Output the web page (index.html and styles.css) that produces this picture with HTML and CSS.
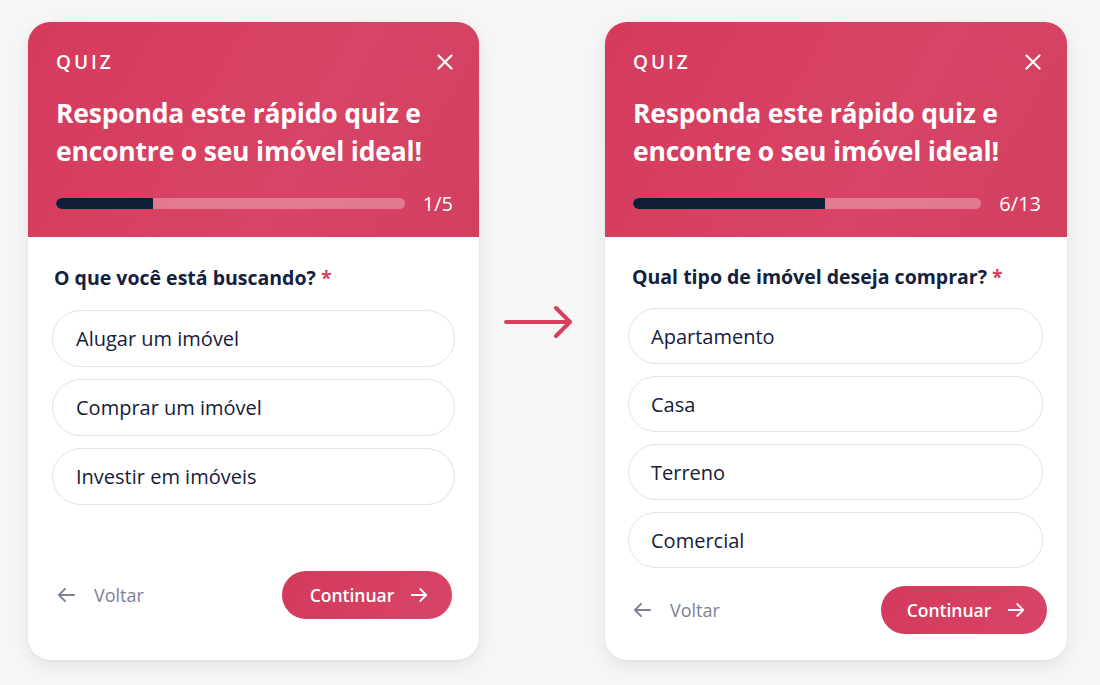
FILE: index.html
```html
<!DOCTYPE html>
<html lang="pt-BR">
<head>
<meta charset="utf-8">
<title>Quiz</title>
<link rel="stylesheet" href="styles.css">
</head>
<body>
<main class="stage">
  <section class="card card--left">
    <header class="card-head">
      <div class="head-top">
        <span class="eyebrow">QUIZ</span>
        <svg class="close" viewBox="0 0 16 16" width="16" height="16"><path d="M1.5 1.5L14.5 14.5M14.5 1.5L1.5 14.5" stroke="#fff" stroke-width="2.2" stroke-linecap="round"/></svg>
      </div>
      <h1 class="title">Responda este rápido quiz e encontre o seu imóvel ideal!</h1>
      <div class="progress">
        <div class="track"><div class="fill" style="width:27.8%"></div></div>
        <span class="count">1/5</span>
      </div>
    </header>
    <div class="card-body">
      <p class="question">O que você está buscando? <span class="req">*</span></p>
      <ul class="options">
        <li class="option">Alugar um imóvel</li>
        <li class="option">Comprar um imóvel</li>
        <li class="option">Investir em imóveis</li>
      </ul>
      <footer class="foot">
        <span class="back">
          <svg viewBox="0 0 20 16" width="19" height="16"><path d="M18 8H2M8.5 1.5L2 8l6.5 6.5" fill="none" stroke="#7b8294" stroke-width="2" stroke-linecap="round" stroke-linejoin="round"/></svg>
          <span>Voltar</span>
        </span>
        <button class="next">Continuar
          <svg viewBox="0 0 20 16" width="18" height="16"><path d="M2 8h16M11.5 1.5L18 8l-6.5 6.5" fill="none" stroke="#fff" stroke-width="2.2" stroke-linecap="round" stroke-linejoin="round"/></svg>
        </button>
      </footer>
    </div>
  </section>

  <div class="flow-arrow">
    <svg viewBox="0 0 70 34" width="70" height="34"><path d="M2 17H66M52 3L66 17L52 31" fill="none" stroke="#d63f60" stroke-width="4" stroke-linecap="round" stroke-linejoin="round"/></svg>
  </div>

  <section class="card card--right">
    <header class="card-head">
      <div class="head-top">
        <span class="eyebrow">QUIZ</span>
        <svg class="close" viewBox="0 0 16 16" width="16" height="16"><path d="M1.5 1.5L14.5 14.5M14.5 1.5L1.5 14.5" stroke="#fff" stroke-width="2.2" stroke-linecap="round"/></svg>
      </div>
      <h1 class="title">Responda este rápido quiz e encontre o seu imóvel ideal!</h1>
      <div class="progress">
        <div class="track"><div class="fill" style="width:55%"></div></div>
        <span class="count">6/13</span>
      </div>
    </header>
    <div class="card-body">
      <p class="question">Qual tipo de imóvel deseja comprar? <span class="req">*</span></p>
      <ul class="options">
        <li class="option">Apartamento</li>
        <li class="option">Casa</li>
        <li class="option">Terreno</li>
        <li class="option">Comercial</li>
      </ul>
      <footer class="foot">
        <span class="back">
          <svg viewBox="0 0 20 16" width="19" height="16"><path d="M18 8H2M8.5 1.5L2 8l6.5 6.5" fill="none" stroke="#7b8294" stroke-width="2" stroke-linecap="round" stroke-linejoin="round"/></svg>
          <span>Voltar</span>
        </span>
        <button class="next">Continuar
          <svg viewBox="0 0 20 16" width="18" height="16"><path d="M2 8h16M11.5 1.5L18 8l-6.5 6.5" fill="none" stroke="#fff" stroke-width="2.2" stroke-linecap="round" stroke-linejoin="round"/></svg>
        </button>
      </footer>
    </div>
  </section>
</main>
</body>
</html>
```

FILE: styles.css
```css
* { box-sizing: border-box; }
html, body { margin: 0; padding: 0; }
body {
  background: #f6f6f7;
  font-family: "Open Sans", "Noto Sans", sans-serif;
  color: #14213d;
  width: 1100px;
  height: 685px;
  overflow: hidden;
}
.stage {
  display: flex;
  align-items: flex-start;
  padding: 22px 0 0 28px;
}
.card {
  height: 638px;
  background: #fff;
  border-radius: 22px;
  overflow: hidden;
  box-shadow: 0 6px 18px rgba(20, 25, 40, 0.08), 0 1px 3px rgba(20, 25, 40, 0.05);
  display: flex;
  flex-direction: column;
}
.card--left { width: 451px; }
.card--right { width: 462px; }

.card-head {
  background: linear-gradient(120deg, #d53a5c 0%, #d84465 60%, #d23f5f 100%);
  color: #fff;
  padding: 26px 26px 21px 28px;
}
.head-top {
  height: 28px;
  display: flex;
  align-items: center;
  justify-content: space-between;
}
.eyebrow {
  font-size: 19px;
  font-weight: 600;
  letter-spacing: 3px;
}
.close { display: block; }
.title {
  margin: 18px 0 0;
  font-size: 26.5px;
  line-height: 38px;
  font-weight: 700;
  letter-spacing: -0.2px;
}
.progress {
  margin-top: 20px;
  height: 26px;
  display: flex;
  align-items: center;
  gap: 18px;
}
.track {
  flex: 1;
  height: 11px;
  border-radius: 6px;
  background: rgba(255, 255, 255, 0.3);
  overflow: hidden;
}
.fill {
  height: 100%;
  background: #0f1f37;
  border-radius: 6px 0 0 6px;
}
.count {
  font-size: 20px;
  font-weight: 400;
}

.card-body {
  flex: 1;
  display: flex;
  flex-direction: column;
  padding: 28px 24px 41px 24px;
}
.card--right .card-body { padding: 27px 24px 26px 23px; }
.question {
  margin: 0 0 0 2px;
  font-size: 19.5px;
  line-height: 26px;
  font-weight: 700;
  color: #14213d;
}
.card--right .question { margin-left: 4px; }
.req { color: #d63f60; }
.options {
  list-style: none;
  margin: 19px 0 0;
  padding: 0;
  display: flex;
  flex-direction: column;
  gap: 12px;
}
.card--right .options { margin-top: 18px; }
.option {
  height: 57px;
  border: 1.5px solid #e3e3e7;
  border-radius: 29px;
  display: flex;
  align-items: center;
  padding-left: 23px;
  font-size: 20px;
  color: #15203a;
}
.card--right .option { height: 56px; padding-left: 22px; }

.foot {
  margin-top: auto;
  display: flex;
  align-items: center;
  justify-content: space-between;
  padding-left: 5px;
}
.card--right .foot { margin-right: -4px; }
.back {
  display: flex;
  align-items: center;
  gap: 18px;
  font-size: 18px;
  color: #7b8294;
}
.back svg { display: block; }
.next {
  height: 48px;
  width: 170px;
  border: none;
  border-radius: 24px;
  background: linear-gradient(120deg, #d33a5b, #d94466);
  color: #fff;
  font-family: inherit;
  font-size: 17.5px;
  font-weight: 600;
  display: flex;
  align-items: center;
  justify-content: center;
  gap: 16px;
  padding: 0 0 0 4px;
  margin-right: 3px;
}
.card--right .next { width: 166px; margin-right: 0; }
.next svg { display: block; }

.flow-arrow {
  width: 126px;
  padding-top: 283px;
  display: flex;
  justify-content: center;
  padding-right: 6px;
}
.flow-arrow svg { display: block; }
```
